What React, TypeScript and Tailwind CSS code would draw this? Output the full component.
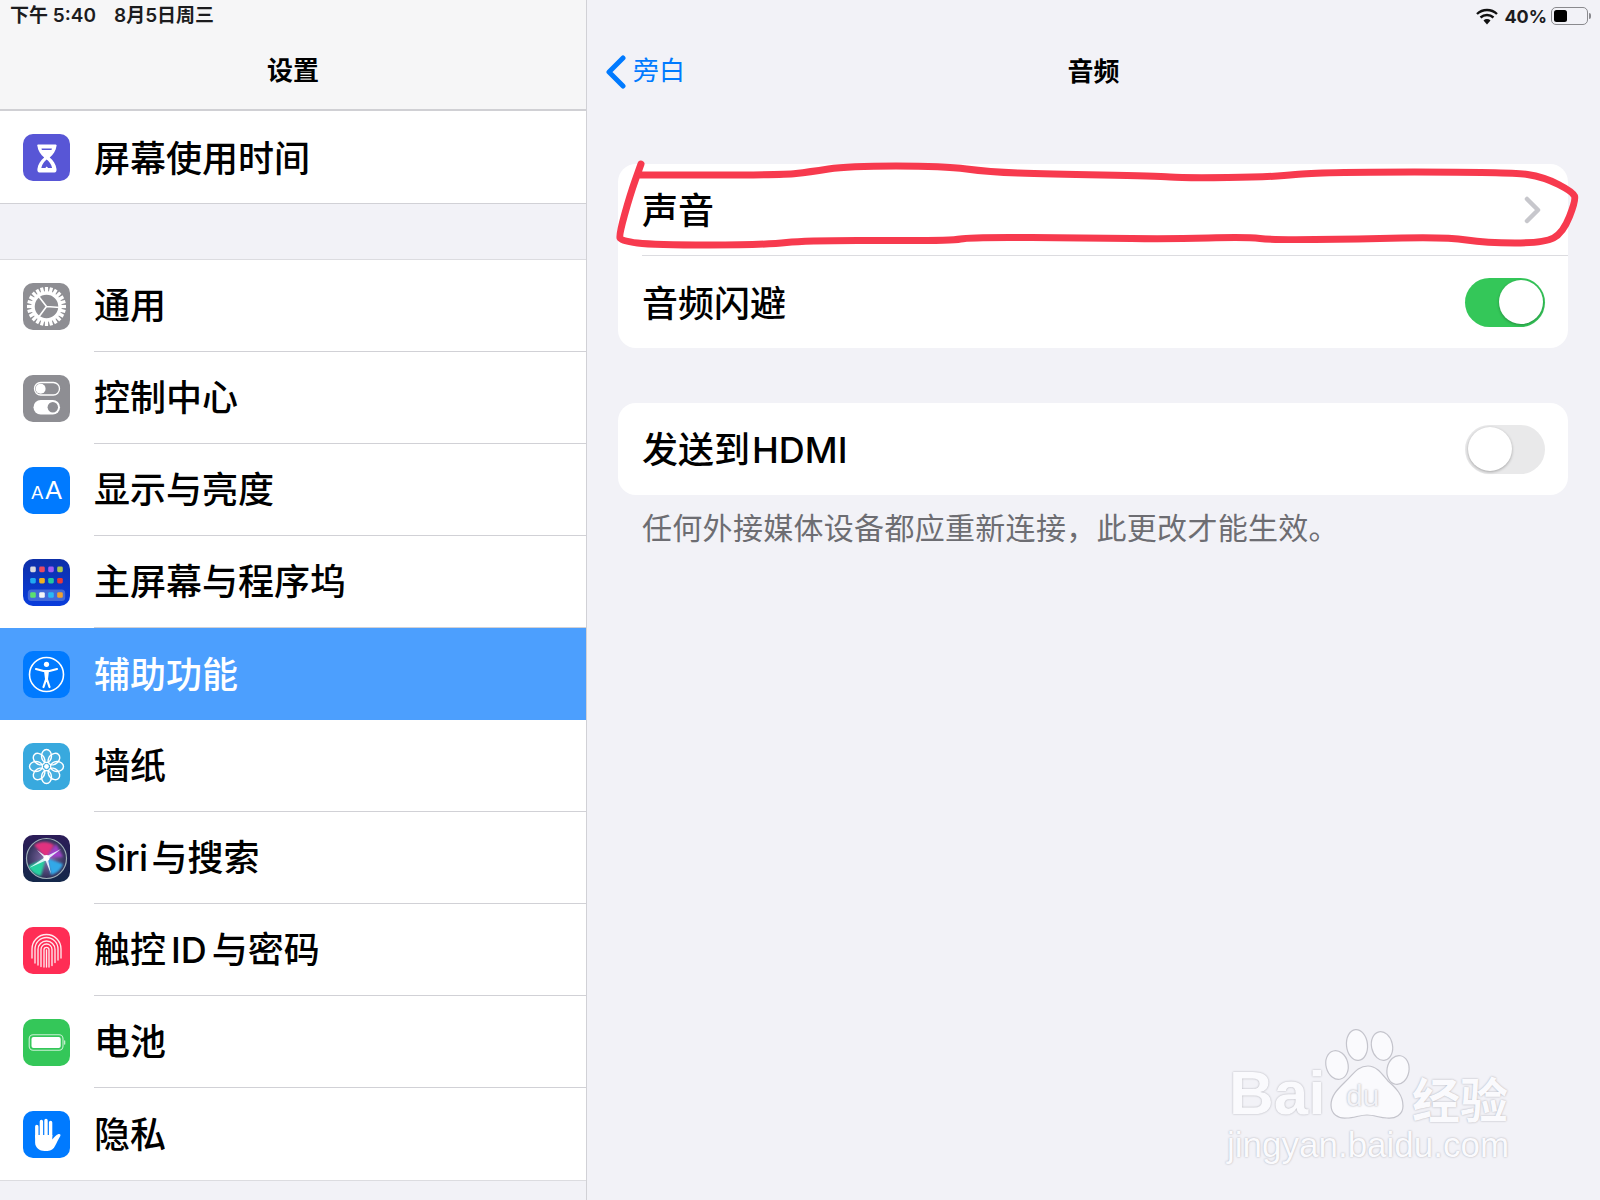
import type { ReactNode } from 'react';

const white = '#ffffff';

const Hourglass = () => (
  <svg viewBox="0 0 47 47" className="w-full h-full">
    <rect width="47" height="47" fill="#5856d6" />
    <path
      d="M15 10.500h17.500a1 1 0 0 1 1 1.500c-.6 5-3.400 8.600-6.800 11.500 3.400 3 6.200 6.600 6.800 11.500.3 1.800-.5 3.500-2 3.500H16.500c-1.600 0-2.400-1.700-2.100-3.500.6-4.900 3.400-8.500 6.800-11.500-3.400-2.900-6.200-6.500-6.800-11.500a1 1 0 0 1 .6-1.500z"
      fill={white}
    />
    <path d="M23.700 25.500c2.200 1.900 4.700 4.700 5.400 8.500h-4l-1.400-1.500-1.400 1.500h-4c.7-3.800 3.200-6.600 5.400-8.500z" fill="#5856d6" />
    <path d="M18.500 14.600h10.400l-.4 1.300H18.900z" fill="#5856d6" />
  </svg>
);

const Gear = () => (
  <svg viewBox="0 0 47 47" className="w-full h-full">
    <rect width="47" height="47" fill="#8e8e93" />
    {Array.from({ length: 24 }).map((_, i) => (
      <rect key={i} x="21.900" y="4" width="3.200" height="6.500" fill={white} transform={`rotate(${i * 15} 23.5 23.5)`} />
    ))}
    <circle cx="23.5" cy="23.5" r="13.500" fill="none" stroke={white} strokeWidth="3.500" />
    <path d="M23.500 23.500L15 12.500M23.500 23.500L37 24.500M23.500 23.500L15 35" stroke={white} strokeWidth="1.600" />
  </svg>
);

const Toggles = () => (
  <svg viewBox="0 0 47 47" className="w-full h-full">
    <rect width="47" height="47" fill="#8e8e93" />
    <rect x="11.5" y="7.5" width="25" height="12.5" rx="6.2" fill="none" stroke={white} strokeWidth="1.3" />
    <circle cx="17.6" cy="13.7" r="5" fill={white} />
    <rect x="10.5" y="25" width="26.5" height="14.5" rx="7.2" fill={white} />
    <circle cx="29.8" cy="32.2" r="5.2" fill="#8e8e93" />
  </svg>
);

const Display = () => (
  <div className="w-full h-full bg-[#007aff] flex items-baseline justify-center gap-[2px] pt-[10px] text-white font-['Liberation_Sans',sans-serif]">
    <span className="text-[18px] leading-[26px]">A</span>
    <span className="text-[25px] leading-[26px]">A</span>
  </div>
);

const homeDots = [
  [10, 10.4, '#d8d8e0'],
  [19, 10.4, '#e84a62'],
  [28, 10.4, '#a05cf2'],
  [37, 10.4, '#a8c850'],
  [10, 21.7, '#20a8f0'],
  [19, 21.7, '#eeb020'],
  [28, 21.7, '#20c8a0'],
  [37, 21.7, '#e83838'],
  [10, 36, '#5ce070'],
  [19, 36, '#f4f4f8'],
  [28, 36, '#28b8f4'],
  [37, 36, '#f0a030'],
] as const;

const HomeScreen = () => (
  <svg viewBox="0 0 47 47" className="w-full h-full">
    <defs>
      <linearGradient id="home" x1="0" y1="0" x2="0" y2="1">
        <stop offset="0" stopColor="#0d2fa8" />
        <stop offset="1" stopColor="#0a3ddc" />
      </linearGradient>
    </defs>
    <rect width="47" height="47" fill="url(#home)" />
    <rect x="4.8" y="30.5" width="37.4" height="11.5" rx="3.5" fill="#6f8fe0" opacity="0.55" />
    {homeDots.map(([x, y, c], i) => (
      <rect key={i} x={x - 2.8} y={y - 2.8} width="5.6" height="5.6" rx="1.4" fill={c} />
    ))}
  </svg>
);

const Accessibility = () => (
  <svg viewBox="0 0 47 47" className="w-full h-full">
    <rect width="47" height="47" fill="#007aff" />
    <circle cx="23.5" cy="23.5" r="17" fill="none" stroke={white} strokeWidth="1.6" />
    <circle cx="23.5" cy="13.3" r="2.6" fill={white} />
    <path
      d="M13 18l7.500 2h6l7.500-2M23.500 20v7.500M20.500 36l3-9 3 9"
      fill="none"
      stroke={white}
      strokeWidth="2.200"
      strokeLinecap="round"
      strokeLinejoin="round"
    />
    <path d="M21 20h5l-1 8h-3z" fill={white} />
  </svg>
);

const Flower = () => (
  <svg viewBox="0 0 47 47" className="w-full h-full">
    <rect width="47" height="47" fill="#38a9de" />
    {Array.from({ length: 8 }).map((_, i) => (
      <ellipse
        key={i}
        cx="23.5"
        cy="13"
        rx="5"
        ry="6.500"
        fill="#ffffff"
        fillOpacity="0.08"
        stroke={white}
        strokeWidth="1.400"
        transform={`rotate(${i * 45} 23.5 23.5)`}
      />
    ))}
    <circle cx="23.5" cy="23.5" r="2.4" fill={white} />
  </svg>
);

const Siri = () => (
  <svg viewBox="0 0 47 47" className="w-full h-full">
    <defs>
      <linearGradient id="siribg" x1="0" y1="0" x2="0" y2="1">
        <stop offset="0" stopColor="#2c1c58" />
        <stop offset="1" stopColor="#14284a" />
      </linearGradient>
      <radialGradient id="siriglow" cx="0.5" cy="0.5" r="0.55">
        <stop offset="0" stopColor="#8c70b0" />
        <stop offset="1" stopColor="#26294e" />
      </radialGradient>
      <filter id="sirisoft">
        <feGaussianBlur stdDeviation="1.200" />
      </filter>
      <clipPath id="siriclip">
        <circle cx="23.5" cy="23.5" r="19.500" />
      </clipPath>
    </defs>
    <rect width="47" height="47" fill="url(#siribg)" />
    <circle cx="23.5" cy="23.5" r="20" fill="url(#siriglow)" stroke="#9fb0b8" strokeWidth="1.200" />
    <g clipPath="url(#siriclip)">
      <g filter="url(#sirisoft)">
        <path d="M23 23L11 10c6-4 14-4 20 0z" fill="#e0307f" />
        <path d="M23 23L33 9l7 13z" fill="#a040c8" />
        <path d="M24 23l16 6c-2 6-6 9-12 11z" fill="#30a8e8" />
        <path d="M23 23L5 31c2 5 7 9 13 10z" fill="#28d0a0" />
      </g>
      <path d="M6 33l17-11.500 2 3zM38 14L22 22l2 3zM28 39L24.500 22l-3 1zM14 15l10 7-1.500 2z" fill="#eafaff" fillOpacity="0.9" />
    </g>
    <circle cx="23.500" cy="23" r="3" fill={white} />
  </svg>
);

const Fingerprint = () => (
  <svg viewBox="0 0 47 47" className="w-full h-full">
    <rect width="47" height="47" fill="#ff2d55" />
    <g fill="none" stroke="#ffffff" strokeOpacity="0.9" strokeWidth="1.35" strokeLinecap="round">
      <path d="M9 31V22a14.500 14.500 0 0 1 29 0v9" />
      <path d="M12 36V22a11.500 11.500 0 0 1 23 0v11" />
      <path d="M15 38V22.500a8.500 8.500 0 0 1 17 0v13" />
      <path d="M18 39.500V22.500a5.500 5.500 0 0 1 11 0v16" />
      <path d="M21 40V22.800a2.500 2.500 0 0 1 5 0V40" />
      <path d="M23.500 23V40" />
    </g>
  </svg>
);

const BatteryIcon = () => (
  <svg viewBox="0 0 47 47" className="w-full h-full">
    <rect width="47" height="47" fill="#34c759" />
    <rect x="6.2" y="15.800" width="33.800" height="15.400" rx="4" fill="none" stroke={white} strokeOpacity="0.75" strokeWidth="1.1" />
    <rect x="8.500" y="18" width="29.200" height="11" rx="2" fill={white} />
    <rect x="41" y="21.300" width="1.300" height="4.400" rx="0.6" fill={white} opacity="0.7" />
  </svg>
);

const HandIcon = () => (
  <svg viewBox="0 0 47 47" className="w-full h-full">
    <rect width="47" height="47" fill="#007aff" />
    <g stroke={white} strokeWidth="3.400" strokeLinecap="round" fill="none">
      <path d="M13.800 26V15.500M18.400 24V10.500M23 24V9.500M27.600 25V11.500" />
    </g>
    <path
      d="M12.100 24h17.200v4.500c1.500-2 3.500-4.500 6.200-5.500 1.400-.5 2.500.6 1.800 1.900-1.900 3.200-3.700 7-5.300 10.100-1.300 2.700-3.800 5-7.500 5h-3c-4.700 0-9.400-3.100-9.400-8.500z"
      fill={white}
    />
  </svg>
);

type Item = { label: ReactNode; icon: ReactNode; selected?: boolean };

const general: Item[] = [
  { label: '通用', icon: <Gear /> },
  { label: '控制中心', icon: <Toggles /> },
  { label: '显示与亮度', icon: <Display /> },
  { label: '主屏幕与程序坞', icon: <HomeScreen /> },
  { label: '辅助功能', icon: <Accessibility />, selected: true },
  { label: '墙纸', icon: <Flower /> },
  {
    label: (
      <span>
        <span className="tracking-[-0.6px]">Siri</span>
        <span className="ml-[4px]">与搜索</span>
      </span>
    ),
    icon: <Siri />,
  },
  {
    label: (
      <span>
        触控<span className="mx-[5px]">ID</span>与密码
      </span>
    ),
    icon: <Fingerprint />,
  },
  { label: '电池', icon: <BatteryIcon /> },
  { label: '隐私', icon: <HandIcon /> },
];

const SettingsRow = ({ item, last }: { item: Item; last?: boolean }) => (
  <div className={`flex items-center h-[92px] ${item.selected ? 'bg-[#4c9ffe] text-white' : 'bg-white text-black'}`}>
    <div className="w-[47px] h-[47px] ml-[23px] mr-6 shrink-0 rounded-[10px] overflow-hidden">{item.icon}</div>
    <div
      className={`flex-1 h-full flex items-center pt-[1px] text-[36px] font-medium ${
        last || item.selected ? '' : 'border-b border-[#d1d1d6]'
      }`}
    >
      {item.label}
    </div>
  </div>
);

const Switch = ({ on }: { on?: boolean }) => (
  <div
    className={`w-[80px] h-[49px] rounded-full p-[2.500px] flex ${
      on ? 'bg-[#34c759] justify-end' : 'bg-[#e9e9ea] justify-start'
    }`}
  >
    <div className="w-[44px] h-[44px] rounded-full bg-white shadow-[0_1px_3px_rgba(0,0,0,0.3)]" />
  </div>
);

const penPoints: [number, number][] = [
  [641, 164], [630, 195], [619, 235], [621, 241], [654, 245], [764, 245], [809, 240], [951, 241], [970, 237],
  [1093, 238], [1170, 239], [1247, 237], [1273, 240], [1357, 239], [1447, 237], [1486, 243], [1544, 243],
  [1563, 233], [1576, 200], [1573, 192], [1544, 177], [1511, 172], [1318, 172], [1273, 177], [1183, 178],
  [1157, 176], [1047, 174], [989, 172], [944, 166], [848, 166], [809, 172], [783, 175], [641, 175],
];

const penPath =
  penPoints
    .map(([x, y], i) => {
      if (i === 0) return `M${x} ${y}`;
      const [px, py] = penPoints[i - 1];
      return `Q${px} ${py} ${(px + x) / 2} ${(py + y) / 2}`;
    })
    .join(' ') + ' L641 175';

const Watermark = () => (
  <div className="absolute left-[1200px] top-[1010px] w-[340px] h-[180px] text-[#fafafd] font-['Liberation_Sans',sans-serif] [text-shadow:0_0_2px_#a6a6ae]">
    <svg viewBox="0 0 340 180" className="absolute inset-0 w-full h-full">
      <g fill="#fafafd" stroke="#c4c4cc" strokeWidth="1.200">
        <ellipse cx="157" cy="35" rx="10.500" ry="15.500" transform="rotate(-6 157 35)" />
        <ellipse cx="182" cy="36" rx="10.500" ry="14.500" transform="rotate(-12 182 36)" />
        <ellipse cx="137" cy="55" rx="11" ry="14.500" transform="rotate(-15 137 55)" />
        <ellipse cx="198" cy="60" rx="11" ry="14.500" transform="rotate(10 198 60)" />
        <path d="M168 56c9 0 14 8 20 15 8 7 15 14 15 25 0 9-8 13-16 12-7 0-13-3-20-3s-13 3-20 3c-9 1-16-4-16-13 0-10 7-16 14-23 8-7 12-16 23-16z" />
      </g>
    </svg>
    <span className="absolute left-[29px] top-[55px] text-[62px] leading-[56px] font-bold">Bai</span>
    <span className="absolute left-[146px] top-[68px] text-[30px] leading-[36px] text-[#f2f2f7]">du</span>
    <span className="absolute left-[212px] top-[62px] text-[48px] leading-[50px] font-bold font-['Noto_Sans_CJK_SC',sans-serif]">经验</span>
    <span className="absolute left-[27px] top-[115px] text-[35px] leading-[40px]">jingyan.baidu.com</span>
  </div>
);

export default function App() {
  return (
    <div className="relative flex w-[1600px] h-[1200px] overflow-hidden bg-[#f2f2f7] text-black font-['Inter','Noto_Sans_CJK_SC',sans-serif]">
      <aside className="w-[587px] h-full shrink-0 border-r border-[#d1d1d6] bg-[#f2f2f7]">
        <header className="h-[111px] bg-[#f6f6f7] border-b-2 border-[#d0d0d4]">
          <div className="h-[32px] pl-[10px] flex items-center gap-[18px] text-[19px] font-semibold text-[#1c1c1e]">
            <span>下午 5:40</span>
            <span>8月5日周三</span>
          </div>
          <div className="h-[77px] flex items-center justify-center text-[26px] font-semibold">设置</div>
        </header>
        <div className="border-b border-[#d1d1d6]">
          <SettingsRow item={{ label: <span className="block mt-[3px]">屏幕使用时间</span>, icon: <Hourglass /> }} last />
        </div>
        <div className="h-[55px]" />
        <div className="border-y border-[#dcdce0]">
          {general.map((item, i) => (
            <SettingsRow key={i} item={item} last={i === general.length - 1} />
          ))}
        </div>
      </aside>

      <main className="flex-1 h-full">
        <div className="h-[32px] pr-[12px] flex items-center justify-end text-[18px] font-bold text-[#1c1c1e]">
          <svg viewBox="0 0 22 17" className="w-[22px] h-[17px] mr-[6px]">
            <path d="M1 6a14.500 14.500 0 0 1 20 0" fill="none" stroke="#111" strokeWidth="2.400" />
            <path d="M4.500 9.500a9.500 9.500 0 0 1 13 0" fill="none" stroke="#111" strokeWidth="2.400" />
            <path d="M11 16.500l-3.500-4a5 5 0 0 1 7 0z" fill="#111" />
          </svg>
          <span className="mr-[4px]">40%</span>
          <div className="relative w-[37px] h-[18px] rounded-[5px] border border-[#8a8a8e] p-[2px]">
            <div className="w-[13px] h-full rounded-[2.500px] bg-black" />
            <div className="absolute -right-[4px] top-[5px] w-[2px] h-[6px] rounded-r-sm bg-[#8a8a8e]" />
          </div>
        </div>
        <div className="relative h-[78px] flex items-center justify-center text-[26px] font-semibold">
          <div className="absolute left-[18px] top-[21px] flex items-center gap-[6px] text-[#007aff] font-normal">
            <svg viewBox="0 0 22 34" className="w-[22px] h-[34px]">
              <path d="M18 3L4 17l14 14" fill="none" stroke="#007aff" strokeWidth="5" strokeLinecap="round" strokeLinejoin="round" />
            </svg>
            <span className="-mt-[2px]">旁白</span>
          </div>
          音频
        </div>

        <div className="pt-[54px] pl-[31px] pr-[32px]">
          <section className="bg-white rounded-[18px]">
            <div className="pl-[24px] pr-[23px]">
              <div className="h-[92px] flex items-center justify-between border-b border-[#dcdce0] -mr-[23px] pr-[24px] text-[36px] font-medium">
                <span className="pt-[3px]">声音</span>
                <svg viewBox="0 0 20 28" className="w-[20px] h-[28px] mr-[1px]">
                  <path d="M4 3l11 11L4 25" fill="none" stroke="#c7c7cc" strokeWidth="4.500" strokeLinecap="round" strokeLinejoin="round" />
                </svg>
              </div>
              <div className="h-[92px] flex items-center justify-between text-[36px] font-medium">
                <span className="pt-[3px]">音频闪避</span>
                <Switch on />
              </div>
            </div>
          </section>

          <section className="mt-[55px] bg-white rounded-[18px] h-[92px] pl-[24px] pr-[23px] flex items-center justify-between text-[36px] font-medium">
            <span className="pt-[2px]">
              发送到<span className="ml-[2px]">HDMI</span>
            </span>
            <Switch />
          </section>
          <p className="mt-[13px] pl-[24px] text-[30px] leading-[40px] tracking-[0.3px] text-[#6d6d72]">任何外接媒体设备都应重新连接，此更改才能生效。</p>
        </div>
      </main>

      <svg viewBox="0 0 1600 1200" className="absolute inset-0 w-[1600px] h-[1200px] pointer-events-none">
        <path d={penPath} fill="none" stroke="#f73a4e" strokeWidth="7" strokeLinecap="round" strokeLinejoin="round" />
      </svg>
      <Watermark />
    </div>
  );
}
